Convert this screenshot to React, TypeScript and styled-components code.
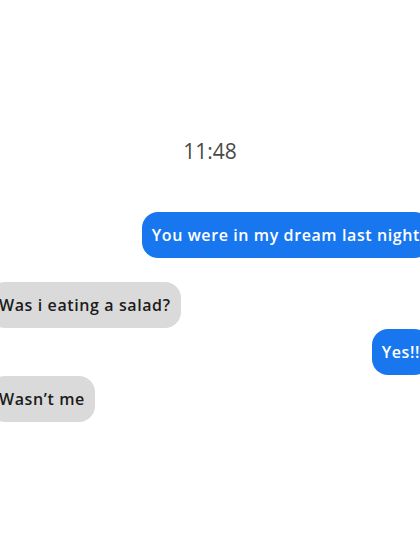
import React from "react";
import styled, { createGlobalStyle } from "styled-components";

const Global = createGlobalStyle`
  html, body { margin: 0; padding: 0; background: #ffffff; overflow: hidden; }
  #root { width: 420px; height: 560px; }
`;

const Page = styled.div`
  width: 420px;
  height: 560px;
  overflow: hidden;
  background: #ffffff;
  display: flex;
  flex-direction: column;
  padding-top: 137px;
  box-sizing: border-box;
  font-family: "Open Sans", "Noto Sans", sans-serif;
`;

const Time = styled.div`
  text-align: center;
  font-family: "Open Sans", sans-serif;
  font-size: 21px;
  line-height: 28px;
  color: #4a4a4a;
  font-weight: 400;
  margin-bottom: 47px;
`;

const Thread = styled.div`
  display: flex;
  flex-direction: column;
`;

const Row = styled.div<{ $mine?: boolean; $gap: number }>`
  display: flex;
  justify-content: ${(p) => (p.$mine ? "flex-end" : "flex-start")};
  margin-top: ${(p) => p.$gap}px;
`;

const Bubble = styled.div<{ $mine?: boolean }>`
  flex: none;
  height: 46px;
  display: flex;
  align-items: center;
  box-sizing: border-box;
  padding: 0 10px;
  border-radius: 16px;
  white-space: nowrap;
  font-size: 16px;
  font-weight: 600;
  letter-spacing: 0.6px;
  background: ${(p) => (p.$mine ? "#1877ee" : "#dadada")};
  color: ${(p) => (p.$mine ? "#ffffff" : "#1c1c1c")};
  margin-right: ${(p) => (p.$mine ? "-10px" : "0")};
  margin-left: ${(p) => (p.$mine ? "0" : "-11px")};
`;

const messages = [
  { text: "You were in my dream last night", mine: true, gap: 0 },
  { text: "Was i eating a salad?", mine: false, gap: 24 },
  { text: "Yes!!", mine: true, gap: 1 },
  { text: "Wasn’t me", mine: false, gap: 1 },
];

export default function App() {
  return (
    <Page>
      <Global />
      <Time>11:48</Time>
      <Thread>
        {messages.map((m, i) => (
          <Row key={i} $mine={m.mine} $gap={m.gap}>
            <Bubble $mine={m.mine}>{m.text}</Bubble>
          </Row>
        ))}
      </Thread>
    </Page>
  );
}
